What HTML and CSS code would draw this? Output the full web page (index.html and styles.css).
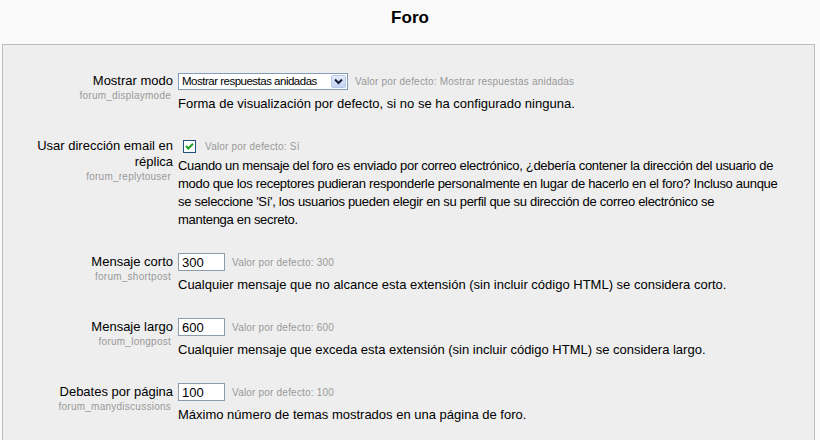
FILE: index.html
```html
<!DOCTYPE html>
<html lang="es">

<head>
    <meta charset="UTF-8">
    <title>Foro</title>
    <link rel="stylesheet" href="styles.css">
</head>

<body>
    <h2 class="page-title">Foro</h2>

    <div class="settings-box">
        <div class="setting">
            <div class="setting-label">
                <label>Mostrar modo</label>
                <span class="setting-name">forum_displaymode</span>
            </div>
            <div class="setting-field">
                <div class="field-line">
                    <div class="fake-select">
                        <span class="select-text">Mostrar respuestas anidadas</span>
                        <span class="select-btn">
                            <svg width="9" height="7" viewBox="0 0 9 7"><path d="M1 1.5 L4.5 5 L8 1.5" fill="none" stroke="#1a1a3a" stroke-width="2"/></svg>
                        </span>
                    </div>
                    <span class="default-value">Valor por defecto: Mostrar respuestas anidadas</span>
                </div>
                <div class="description">Forma de visualización por defecto, si no se ha configurado ninguna.</div>
            </div>
        </div>

        <div class="setting">
            <div class="setting-label">
                <label>Usar dirección email en réplica</label>
                <span class="setting-name">forum_replytouser</span>
            </div>
            <div class="setting-field">
                <div class="field-line check-line">
                    <span class="fake-check">
                        <svg width="13" height="13" viewBox="0 0 13 13">
                            <rect x="0.5" y="0.5" width="12" height="12" fill="#fff" stroke="#1c5180"/>
                            <path d="M3 6 L5.3 8.5 L10 3.8" fill="none" stroke="#21a121" stroke-width="2"/>
                        </svg>
                    </span>
                    <span class="default-value">Valor por defecto: Sí</span>
                </div>
                <div class="description long">Cuando un mensaje del foro es enviado por correo electrónico, ¿debería contener la dirección del usuario de<br>modo que los receptores pudieran responderle personalmente en lugar de hacerlo en el foro? Incluso aunque<br>se seleccione 'Sí', los usuarios pueden elegir en su perfil que su dirección de correo electrónico se<br>mantenga en secreto.</div>
            </div>
        </div>

        <div class="setting">
            <div class="setting-label">
                <label>Mensaje corto</label>
                <span class="setting-name">forum_shortpost</span>
            </div>
            <div class="setting-field">
                <div class="field-line">
                    <input type="text" class="text-input" value="300">
                    <span class="default-value">Valor por defecto: 300</span>
                </div>
                <div class="description">Cualquier mensaje que no alcance esta extensión (sin incluir código HTML) se considera corto.</div>
            </div>
        </div>

        <div class="setting">
            <div class="setting-label">
                <label>Mensaje largo</label>
                <span class="setting-name">forum_longpost</span>
            </div>
            <div class="setting-field">
                <div class="field-line">
                    <input type="text" class="text-input" value="600">
                    <span class="default-value">Valor por defecto: 600</span>
                </div>
                <div class="description">Cualquier mensaje que exceda esta extensión (sin incluir código HTML) se considera largo.</div>
            </div>
        </div>

        <div class="setting">
            <div class="setting-label">
                <label>Debates por página</label>
                <span class="setting-name">forum_manydiscussions</span>
            </div>
            <div class="setting-field">
                <div class="field-line">
                    <input type="text" class="text-input" value="100">
                    <span class="default-value">Valor por defecto: 100</span>
                </div>
                <div class="description">Máximo número de temas mostrados en una página de foro.</div>
            </div>
        </div>
    </div>
</body>

</html>
```

FILE: styles.css
```css
* {
    margin: 0;
    padding: 0;
    box-sizing: border-box;
}

body {
    font-family: "Liberation Sans", Arial, sans-serif;
    font-size: 13px;
    color: #000;
    background-color: #fafafa;
}

.page-title {
    font-size: 17px;
    font-weight: bold;
    line-height: 20px;
    text-align: center;
    margin-top: 8px;
    margin-bottom: 16px;
}

.settings-box {
    margin: 0 5px 0 2px;
    border: 1px solid #bdbdbd;
    background-color: #eeeeee;
    padding-top: 27px;
    min-height: 420px;
}

.setting {
    display: grid;
    grid-template-columns: 170px 1fr;
    column-gap: 5px;
    padding-right: 2px;
    margin-bottom: 24px;
}

.setting-label {
    text-align: right;
    padding-top: 1px;
}

.setting-label label {
    display: block;
    line-height: 16px;
}

.setting-name {
    display: block;
    font-size: 10px;
    line-height: 13px;
    color: #999;
    letter-spacing: 0.25px;
    padding-right: 2px;
}

.field-line {
    display: flex;
    align-items: center;
    height: 18px;
}

.check-line {
    height: 17px;
    margin-top: 1px;
}

.fake-select {
    display: flex;
    align-items: center;
    width: 170px;
    height: 17px;
    border: 1px solid #7f9db9;
    background: #fff;
    padding: 0 1px 0 3px;
}

.select-text {
    flex: 1;
    font-size: 11.5px;
    letter-spacing: -0.5px;
    line-height: 15px;
    white-space: nowrap;
    overflow: hidden;
}

.select-btn {
    display: flex;
    align-items: center;
    justify-content: center;
    width: 15px;
    height: 13px;
    border: 1px solid #b8c8e8;
    border-radius: 2px;
    background: linear-gradient(#e4ebfa, #c4d3f2);
}

.fake-check {
    display: flex;
    margin-left: 5px;
}

.text-input {
    width: 47px;
    height: 18px;
    border: 1px solid #8c9cac;
    background: #fff;
    font-family: "Liberation Sans", Arial, sans-serif;
    font-size: 13px;
    padding: 0 3px;
    outline: none;
}

.default-value {
    font-size: 10px;
    color: #999;
    letter-spacing: 0.2px;
    margin-left: 7px;
}

.check-line .default-value {
    margin-left: 9px;
}

.description {
    margin-top: 5px;
    line-height: 18px;
}

.check-line + .description {
    margin-top: 2px;
}

.description.long {
    letter-spacing: -0.3px;
    white-space: nowrap;
}
```
